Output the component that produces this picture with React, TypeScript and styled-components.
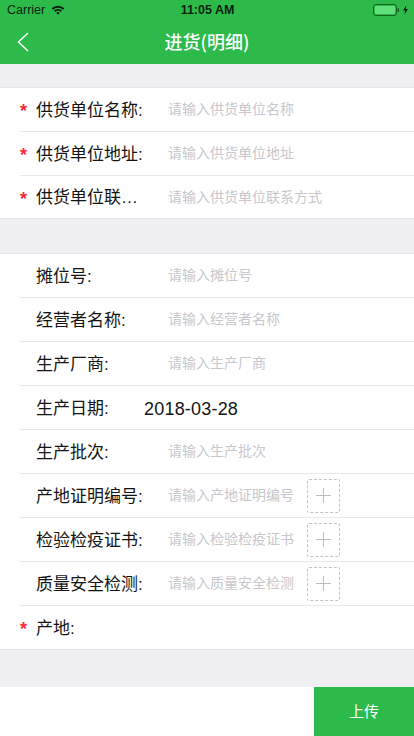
import styled, { createGlobalStyle } from "styled-components";

const GREEN = "#2cbb4a";
const FONT = `"Liberation Sans", "Noto Sans CJK SC", sans-serif`;

const GlobalStyle = createGlobalStyle`
  html, body {
    margin: 0;
    padding: 0;
    background: #efeff4;
    font-family: ${FONT};
  }
  * { box-sizing: border-box; }
`;

const Page = styled.div`
  width: 414px;
  height: 736px;
  display: flex;
  flex-direction: column;
  overflow: hidden;
  background: #efeff4;
`;

const Header = styled.div`
  height: 64px;
  background: ${GREEN};
  flex-shrink: 0;
`;

const StatusBar = styled.div`
  height: 20px;
  padding: 0 6px 0 7px;
  display: grid;
  grid-template-columns: 1fr auto 1fr;
  align-items: center;
  font-size: 12.5px;
  color: #0a1f0e;
`;

const StatusLeft = styled.div`
  display: flex;
  align-items: center;
  gap: 6px;
`;

const StatusRight = styled.div`
  display: flex;
  align-items: center;
  justify-content: flex-end;
  gap: 4px;
`;

const Clock = styled.span`
  font-weight: 700;
  font-size: 12.5px;
`;

const NavBar = styled.div`
  height: 44px;
  position: relative;
  display: flex;
  align-items: center;
  justify-content: center;
`;

const BackIcon = styled.svg`
  position: absolute;
  left: 17px;
  top: 12px;
`;

const Title = styled.div`
  color: #fff;
  font-family: "Noto Sans CJK SC", sans-serif;
  font-size: 18px;
  font-weight: 500;
  padding-bottom: 2px;
`;

const Section = styled.div<{ $gap: number }>`
  margin-top: ${(p) => p.$gap}px;
  background: #fff;
  border-top: 1px solid #e6e6e8;
  border-bottom: 1px solid #e2e2e4;
  padding-left: 20px;
`;

const Row = styled.div<{ $height: number; $last: boolean }>`
  height: ${(p) => p.$height}px;
  display: flex;
  align-items: center;
  position: relative;
  padding-left: 16px;
  border-bottom: ${(p) => (p.$last ? "none" : "1px solid #e9e9eb")};
`;

const Star = styled.span`
  position: absolute;
  left: 0;
  top: 13px;
  color: #fb2b3a;
  font-size: 18px;
  font-weight: 700;
  line-height: 20px;
`;

const Label = styled.div`
  width: 108px;
  flex-shrink: 0;
  padding-bottom: 3px;
  font-size: 17px;
  color: #141414;
  white-space: nowrap;
  overflow: hidden;
  text-overflow: ellipsis;
`;

const Placeholder = styled.div`
  margin-left: 24px;
  padding-bottom: 3px;
  font-size: 14px;
  color: #c7c7cd;
  white-space: nowrap;
`;

const DateValue = styled.div`
  padding-top: 4px;
  font-size: 18px;
  letter-spacing: 0.2px;
  color: #141414;
`;

const AddBox = styled.div`
  width: 33px;
  height: 34px;
  margin-left: 13px;
  border: 1px dashed #c4c4c4;
  border-radius: 2px;
  display: flex;
  align-items: center;
  justify-content: center;
`;

const Footer = styled.div`
  margin-top: auto;
  height: 49px;
  background: #fff;
  display: flex;
  justify-content: flex-end;
`;

const UploadButton = styled.button`
  width: 100px;
  height: 49px;
  padding: 0 0 2px;
  border: none;
  background: ${GREEN};
  color: #fff;
  font-family: ${FONT};
  font-size: 15px;
`;

type Field = {
  label: string;
  placeholder?: string;
  required?: boolean;
  value?: string;
  upload?: boolean;
};

const supplierFields: Field[] = [
  { label: "供货单位名称:", placeholder: "请输入供货单位名称", required: true },
  { label: "供货单位地址:", placeholder: "请输入供货单位地址", required: true },
  { label: "供货单位联系方式:", placeholder: "请输入供货单位联系方式", required: true },
];

const detailFields: Field[] = [
  { label: "摊位号:", placeholder: "请输入摊位号" },
  { label: "经营者名称:", placeholder: "请输入经营者名称" },
  { label: "生产厂商:", placeholder: "请输入生产厂商" },
  { label: "生产日期:", value: "2018-03-28" },
  { label: "生产批次:", placeholder: "请输入生产批次" },
  { label: "产地证明编号:", placeholder: "请输入产地证明编号", upload: true },
  { label: "检验检疫证书:", placeholder: "请输入检验检疫证书", upload: true },
  { label: "质量安全检测:", placeholder: "请输入质量安全检测", upload: true },
  { label: "产地:", required: true },
];

const WifiIcon = () => (
  <svg width="14" height="10" viewBox="0 0 15 11">
    <path d="M0.5 3.6 A10 10 0 0 1 14.5 3.6 L13 5.1 A8 8 0 0 0 2 5.1 Z" fill="#0a1f0e" />
    <path d="M3 6.1 A6.5 6.5 0 0 1 12 6.1 L10.5 7.6 A4.4 4.4 0 0 0 4.5 7.6 Z" fill="#0a1f0e" />
    <path d="M5.5 8.6 A3 3 0 0 1 9.5 8.6 L7.5 10.8 Z" fill="#0a1f0e" />
  </svg>
);

const BatteryIcon = () => (
  <svg width="26" height="12" viewBox="0 0 26 12">
    <rect x="0.5" y="0.5" width="23" height="11" rx="2.5" fill="none" stroke="#14631f" strokeWidth="1" />
    <rect x="2" y="2" width="20" height="8" rx="1" fill="#5fe07a" />
    <rect x="24.5" y="4" width="1.5" height="4" rx="0.7" fill="#14631f" />
  </svg>
);

const BoltIcon = () => (
  <svg width="5" height="10" viewBox="0 0 6 11">
    <path d="M4 0 L0 6.2 H2.6 L1.8 11 L6 4.4 H3.3 Z" fill="#0a1f0e" />
  </svg>
);

const PlusIcon = () => (
  <svg width="15" height="15" viewBox="0 0 15 15">
    <path d="M7.5 0 V15 M0 7.5 H15" stroke="#bdbdbd" strokeWidth="1" />
  </svg>
);

const FieldRow = ({ field, last, lastHeight }: { field: Field; last: boolean; lastHeight: number }) => (
  <Row $last={last} $height={last ? lastHeight : 44}>
    {field.required && <Star>*</Star>}
    <Label>{field.label}</Label>
    {field.placeholder && <Placeholder>{field.placeholder}</Placeholder>}
    {field.value && <DateValue>{field.value}</DateValue>}
    {field.upload && (
      <AddBox>
        <PlusIcon />
      </AddBox>
    )}
  </Row>
);

const App = () => {
  return (
    <Page>
      <GlobalStyle />
      <Header>
        <StatusBar>
          <StatusLeft>
            Carrier
            <WifiIcon />
          </StatusLeft>
          <Clock>11:05 AM</Clock>
          <StatusRight>
            <BatteryIcon />
            <BoltIcon />
          </StatusRight>
        </StatusBar>
        <NavBar>
          <BackIcon width="12" height="20" viewBox="0 0 12 20">
            <path d="M11 1 L1.5 10 L11 19" fill="none" stroke="#fff" strokeWidth="1.5" />
          </BackIcon>
          <Title>进货(明细)</Title>
        </NavBar>
      </Header>
      <Section $gap={23}>
        {supplierFields.map((f, i) => (
          <FieldRow key={f.label} field={f} last={i === supplierFields.length - 1} lastHeight={42} />
        ))}
      </Section>
      <Section $gap={34}>
        {detailFields.map((f, i) => (
          <FieldRow key={f.label} field={f} last={i === detailFields.length - 1} lastHeight={43} />
        ))}
      </Section>
      <Footer>
        <UploadButton>上传</UploadButton>
      </Footer>
    </Page>
  );
};

export default App;
